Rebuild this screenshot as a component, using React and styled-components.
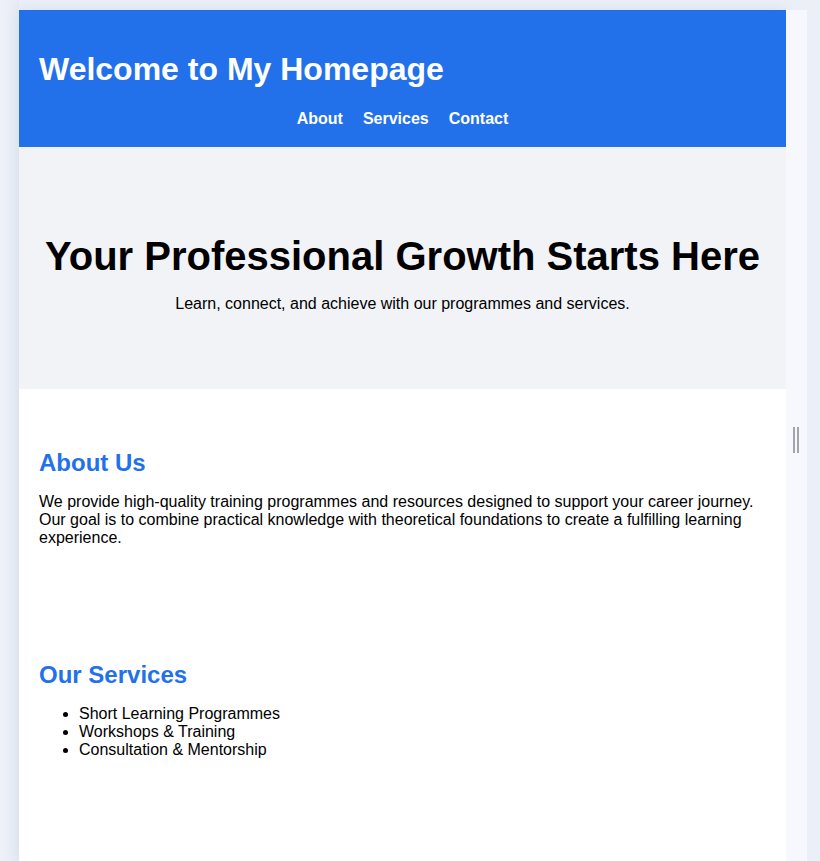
import React from "react";
import styled, { createGlobalStyle } from "styled-components";

const Global = createGlobalStyle`
  html, body { margin: 0; padding: 0; height: 100%; overflow: hidden; }
  body {
    background: #eaeff8;
    font-family: "Liberation Sans", Arial, sans-serif;
  }
`;

const Frame = styled.div`
  display: flex;
  height: 100vh;
  padding: 10px 13px 0 19px;
  box-sizing: border-box;
  background: linear-gradient(90deg, #eef1f8 0%, #e6ebf4 19px, #eaeff8 19px);
`;

const Panel = styled.div`
  width: 767px;
  flex: none;
  background: #ffffff;
  box-shadow: 0 0 14px rgba(40, 60, 110, 0.08);
  overflow: hidden;
`;

const Splitter = styled.div`
  flex: 1;
  background: #f6f8fd;
  display: flex;
  align-items: center;
  justify-content: center;
  gap: 2px;
  padding-right: 1px;
`;

const Grip = styled.span`
  width: 2px;
  height: 26px;
  background: #a3a5a8;
  margin-top: 9px;
`;

const Header = styled.header`
  background: #2271eb;
  color: #ffffff;
  padding: 20px 20px 19px;
`;

const Title = styled.h1`
  font-size: 32px;
  font-weight: bold;
  margin: 21px 0 22px;
`;

const Nav = styled.nav`
  display: flex;
  justify-content: center;
  gap: 20px;
`;

const NavLink = styled.a`
  color: #ffffff;
  font-weight: bold;
  font-size: 16px;
  text-decoration: none;
`;

const Hero = styled.section`
  background: #f1f3f7;
  text-align: center;
  padding: 87px 20px 60px;
`;

const HeroTitle = styled.h2`
  font-size: 40px;
  font-weight: bold;
  margin: 0;
  color: #000;
`;

const HeroText = styled.p`
  font-size: 16px;
  margin: 16px 0;
`;

const Section = styled.section`
  padding: 40px 20px;
`;

const SectionTitle = styled.h2`
  color: #2271eb;
  font-size: 24px;
  font-weight: bold;
  margin: 20px 0 10px;
`;

const Text = styled.p`
  font-size: 16px;
  margin: 16px 0 14px;
  color: #000;
`;

const List = styled.ul`
  margin: 16px 0;
  padding-left: 40px;
  font-size: 16px;
`;

export default function App() {
  return (
    <>
      <Global />
      <Frame>
        <Panel>
          <Header>
            <Title>Welcome to My Homepage</Title>
            <Nav>
              <NavLink href="#about">About</NavLink>
              <NavLink href="#services">Services</NavLink>
              <NavLink href="#contact">Contact</NavLink>
            </Nav>
          </Header>
          <Hero>
            <HeroTitle>Your Professional Growth Starts Here</HeroTitle>
            <HeroText>Learn, connect, and achieve with our programmes and services.</HeroText>
          </Hero>
          <Section id="about">
            <SectionTitle>About Us</SectionTitle>
            <Text>
              We provide high-quality training programmes and resources designed to support your career journey.
              Our goal is to combine practical knowledge with theoretical foundations to create a fulfilling learning experience.
            </Text>
          </Section>
          <Section id="services">
            <SectionTitle>Our Services</SectionTitle>
            <List>
              <li>Short Learning Programmes</li>
              <li>Workshops &amp; Training</li>
              <li>Consultation &amp; Mentorship</li>
            </List>
          </Section>
        </Panel>
        <Splitter>
          <Grip />
          <Grip />
        </Splitter>
      </Frame>
    </>
  );
}
